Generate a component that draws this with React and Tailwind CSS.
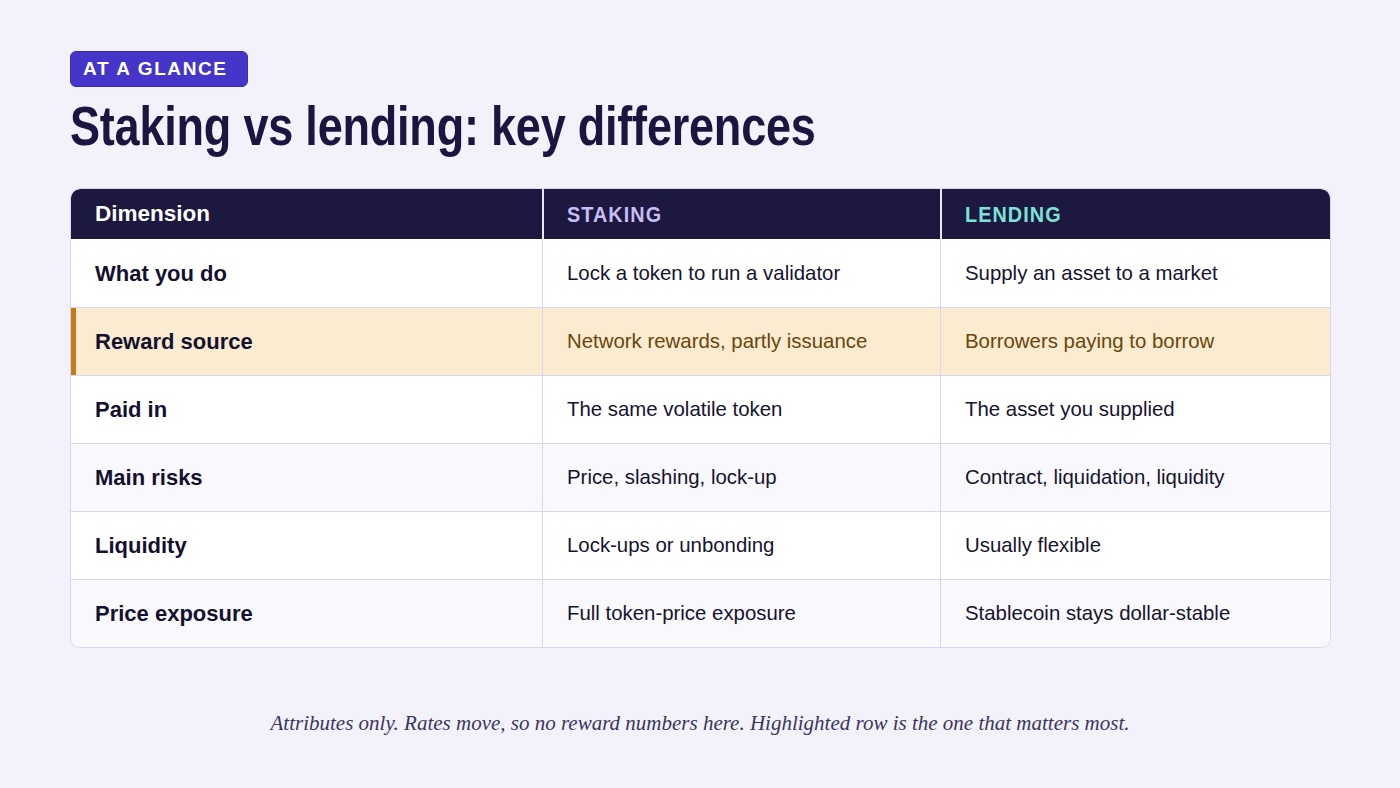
import React from "react";

const rows = [
  { d: "What you do", s: "Lock a token to run a validator", l: "Supply an asset to a market", bg: "bg-white" },
  { d: "Reward source", s: "Network rewards, partly issuance", l: "Borrowers paying to borrow", hl: true },
  { d: "Paid in", s: "The same volatile token", l: "The asset you supplied", bg: "bg-white" },
  { d: "Main risks", s: "Price, slashing, lock-up", l: "Contract, liquidation, liquidity", bg: "bg-[#f9f9fd]" },
  { d: "Liquidity", s: "Lock-ups or unbonding", l: "Usually flexible", bg: "bg-white" },
  { d: "Price exposure", s: "Full token-price exposure", l: "Stablecoin stays dollar-stable", bg: "bg-[#f9f9fd]" },
];

export default function App() {
  return (
    <div className="w-[1400px] h-[788px] bg-[#f3f2fb] px-[70px] pt-[51px] flex flex-col" style={{ fontFamily: '"Liberation Sans", Arial, sans-serif' }}>
      <div className="flex">
        <div className="h-[36px] pl-[12px] pr-[19px] rounded-[6px] bg-[#4536c9] border border-[#3a2cb8] flex items-center text-white font-bold text-[19px] tracking-[1.6px]">
          AT A GLANCE
        </div>
      </div>
      <div className="mt-[6px] h-[66px] flex items-center">
        <h1 className="whitespace-nowrap text-[56px] leading-[66px] font-bold text-[#1b1640] tracking-[-0.3px] scale-x-[0.805] origin-left">
          Staking vs lending: key differences
        </h1>
      </div>
      <div className="mt-[29px] w-[1261px] rounded-[10px] border border-[#d9d5f0] bg-white overflow-hidden">
        <div className="grid grid-cols-[471px_398px_1fr] h-[50px] bg-[#1c1840] rounded-t-[9px]">
          <div className="flex items-center pl-[24px] text-white font-bold text-[22.5px]">Dimension</div>
          <div className="flex items-center pl-[23px] border-l-2 border-[#e8e6f7]">
            <span className="text-[#c9bdf5] font-bold text-[22px] tracking-[1.2px] scale-x-[0.9] origin-left">STAKING</span>
          </div>
          <div className="flex items-center pl-[23px] border-l-2 border-[#e8e6f7]">
            <span className="text-[#7ee3d6] font-bold text-[22px] tracking-[1.2px] scale-x-[0.9] origin-left">LENDING</span>
          </div>
        </div>
        {rows.map((r, i) => (
          <div key={i} className={`grid grid-cols-[471px_398px_1fr] h-[68px] ${i > 0 ? "border-t border-[#d9d5f0]" : ""} ${r.hl ? "bg-[#fbebd0]" : r.bg}`}>
            <div className={`flex items-center text-[22px] font-bold text-[#14112f] ${r.hl ? "border-l-[5px] border-[#c97a10] pl-[19px]" : "pl-[24px]"}`}>{r.d}</div>
            <div className={`flex items-center pl-[24px] border-l border-[#d9d5f0] text-[20.4px] ${r.hl ? "text-[#6b450a]" : "text-[#16132f]"}`}>{r.s}</div>
            <div className={`flex items-center pl-[24px] border-l border-[#d9d5f0] text-[20.4px] ${r.hl ? "text-[#6b450a]" : "text-[#16132f]"}`}>{r.l}</div>
          </div>
        ))}
      </div>
      <p className="mt-[60px] text-center italic text-[21px] text-[#3a3660]" style={{ fontFamily: '"Liberation Serif", "Times New Roman", serif' }}>
        Attributes only. Rates move, so no reward numbers here. Highlighted row is the one that matters most.
      </p>
    </div>
  );
}
